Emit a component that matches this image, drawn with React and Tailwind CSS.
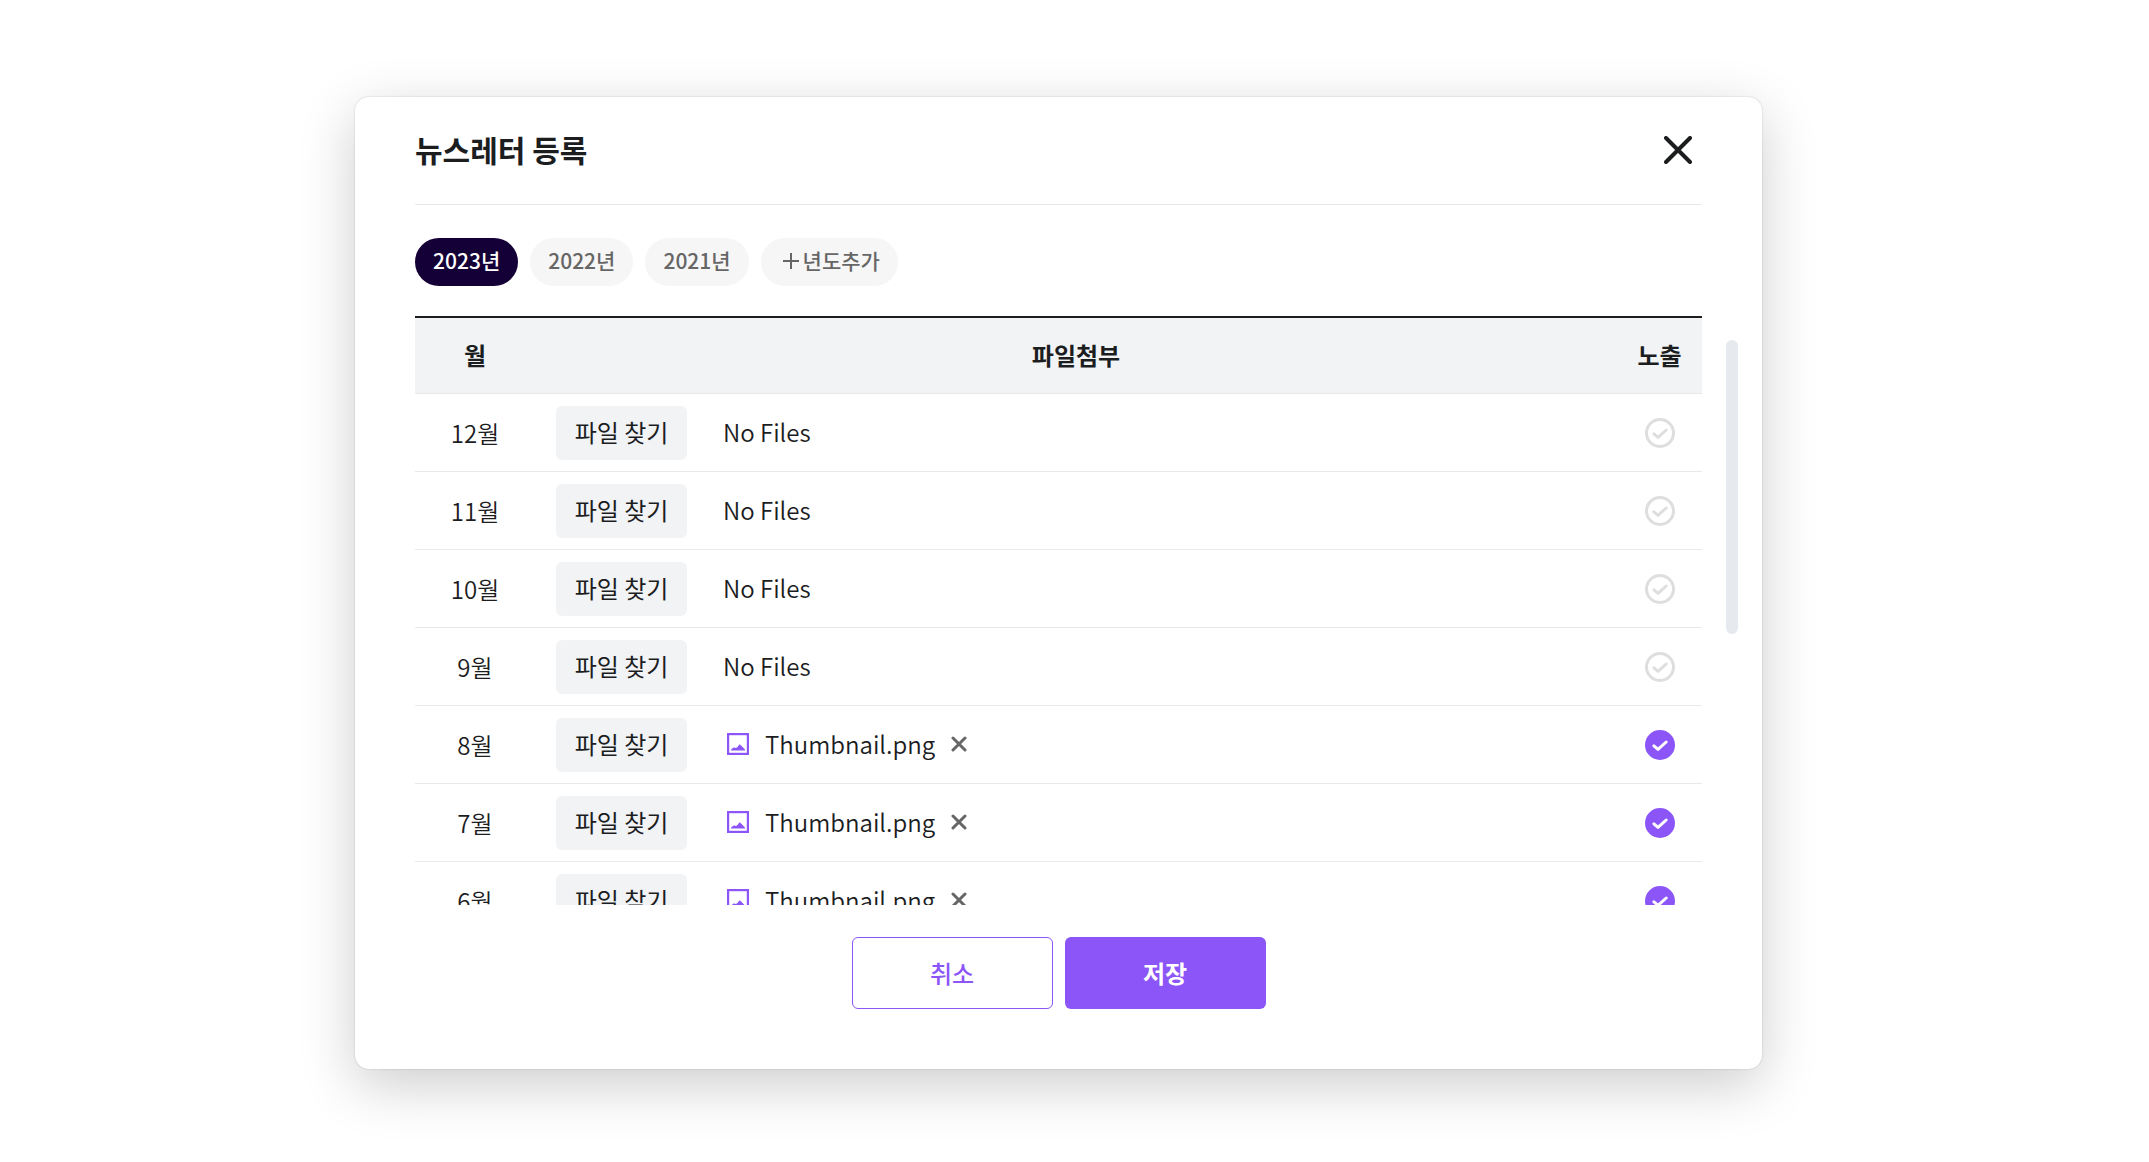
import React, { useState } from "react";

const YEARS = ["2023년", "2022년", "2021년"];

const ROWS = [
  { month: "12월" },
  { month: "11월" },
  { month: "10월" },
  { month: "9월" },
  { month: "8월", file: "Thumbnail.png" },
  { month: "7월", file: "Thumbnail.png" },
  { month: "6월", file: "Thumbnail.png" },
];

function CloseIcon() {
  return (
    <svg viewBox="0 0 28 28" className="size-7" fill="none" stroke="currentColor" strokeWidth="4" strokeLinecap="round" aria-hidden="true">
      <path d="M2 2L26 26M26 2L2 26" />
    </svg>
  );
}

function RemoveIcon() {
  return (
    <svg viewBox="0 0 16 16" className="size-4" fill="none" stroke="currentColor" strokeWidth="3" strokeLinecap="round" aria-hidden="true">
      <path d="M2 2L14 14M14 2L2 14" />
    </svg>
  );
}

function PlusIcon() {
  return (
    <svg viewBox="0 0 16 16" className="size-4" fill="none" stroke="currentColor" strokeWidth="2" aria-hidden="true">
      <path d="M8 0V16M0 8H16" />
    </svg>
  );
}

function ImageIcon() {
  return (
    <svg viewBox="0 0 22 22" className="size-[22px] shrink-0 text-[#8b55f8]" aria-hidden="true">
      <rect x="1.1" y="1.1" width="19.8" height="19.8" fill="none" stroke="currentColor" strokeWidth="2.2" />
      <path d="M4 17.4V16.6L7 14.2L8.4 15L10 14.4L12.6 11.2L14.6 13L18 16.6V17.4Z" fill="currentColor" />
    </svg>
  );
}

function ExposeToggle({ label, defaultChecked }) {
  return (
    <label className="group flex cursor-pointer justify-center">
      <input type="checkbox" className="sr-only" aria-label={label} defaultChecked={defaultChecked} />
      <svg viewBox="0 0 30 30" className="size-[30px]" fill="none" aria-hidden="true">
        <circle cx="15" cy="15" r="13.5" strokeWidth="3" className="fill-white stroke-[#dedede] group-has-checked:fill-[#8b55f8] group-has-checked:stroke-[#8b55f8]" />
        <path d="M8.9 15.8L13 19.4L21.2 12" strokeWidth="3" strokeLinecap="round" strokeLinejoin="round" className="stroke-[#dedede] group-has-checked:stroke-white" />
      </svg>
    </label>
  );
}

export default function App() {
  const [year, setYear] = useState(YEARS[0]);

  return (
    <main className="flex min-h-screen items-center justify-center bg-white pt-1 pr-8 font-['Noto_Sans_CJK_KR',sans-serif] text-[#1c1d1f]">
      <section
        role="dialog"
        aria-labelledby="dialog-title"
        className="w-full max-w-[1407px] rounded-[14px] bg-white pb-[60px] shadow-[0_0_2px_rgba(0,0,0,0.2),0_16px_56px_rgba(0,0,0,0.2)]"
      >
        <header className="mx-[60px] flex h-27 items-center justify-between border-b border-[#e8e9eb] pr-2.5 pb-0.5">
          <h1 id="dialog-title" className="pb-0.5 text-3xl font-bold">뉴스레터 등록</h1>
          <button type="button" aria-label="닫기">
            <CloseIcon />
          </button>
        </header>

        <nav className="mx-[60px] flex gap-3 pt-[33px] pb-[30px]" aria-label="연도">
          {YEARS.map((y) => (
            <button
              key={y}
              type="button"
              aria-pressed={y === year}
              onClick={() => setYear(y)}
              className="h-12 rounded-full bg-[#f6f6f6] px-[18px] pb-0.5 text-[21px] font-medium text-[#666] aria-pressed:bg-[#140037] aria-pressed:text-white"
            >
              {y}
            </button>
          ))}
          <button type="button" className="flex h-12 items-center gap-1 rounded-full bg-[#f6f6f6] pr-[18px] pb-0.5 pl-[22px] text-[21px] font-medium text-[#666]">
            <PlusIcon />
            년도추가
          </button>
        </nav>

        <div className="flex gap-6 pr-6 pl-[60px]">
          <div className="h-[589px] flex-1 overflow-hidden">
            <table className="w-full table-fixed border-separate border-spacing-0 text-2xl">
              <colgroup>
                <col className="w-[120px]" />
                <col />
                <col className="w-[85px]" />
              </colgroup>
              <thead className="bg-[#f1f3f5]">
                <tr className="h-[78px]">
                  <th scope="col" className="border-t-2 border-b border-t-[#1c1d1f] border-b-[#e8e9eb] pb-0.5 font-bold">월</th>
                  <th scope="col" className="border-t-2 border-b border-t-[#1c1d1f] border-b-[#e8e9eb] pb-0.5 font-bold">파일첨부</th>
                  <th scope="col" className="border-t-2 border-b border-t-[#1c1d1f] border-b-[#e8e9eb] pb-0.5 font-bold">노출</th>
                </tr>
              </thead>
              <tbody className="font-[350]">
                {ROWS.map(({ month, file }) => (
                  <tr key={month} className="h-[78px]">
                    <td className="border-b border-[#e8e9eb] text-center">{month}</td>
                    <td className="border-b border-[#e8e9eb] pl-[21px]">
                      <div className="flex items-center gap-9">
                        <button type="button" className="h-[54px] w-[131px] rounded-md bg-[#f1f3f5] pb-0.5 font-normal">
                          파일 찾기
                        </button>
                        {file ? (
                          <div className="flex items-center gap-4 pb-0.5 pl-1">
                            <ImageIcon />
                            <span>{file}</span>
                            <button type="button" className="text-[#666]" aria-label={`${month} 파일 삭제`}>
                              <RemoveIcon />
                            </button>
                          </div>
                        ) : (
                          <span className="pb-0.5">No Files</span>
                        )}
                      </div>
                    </td>
                    <td className="border-b border-[#e8e9eb] text-center">
                      <ExposeToggle label={`${month} 노출`} defaultChecked={Boolean(file)} />
                    </td>
                  </tr>
                ))}
              </tbody>
            </table>
          </div>
          <div className="mt-6 h-[294px] w-3 rounded-full bg-[#e6eaee]" />
        </div>

        <footer className="mt-8 flex justify-center gap-3 text-2xl font-medium">
          <button type="button" className="h-18 w-[201px] rounded-md border border-[#8b55f8] text-[#8b55f8]">취소</button>
          <button type="button" className="h-18 w-[201px] rounded-md bg-[#8b55f8] font-bold text-white">저장</button>
        </footer>
      </section>
    </main>
  );
}
